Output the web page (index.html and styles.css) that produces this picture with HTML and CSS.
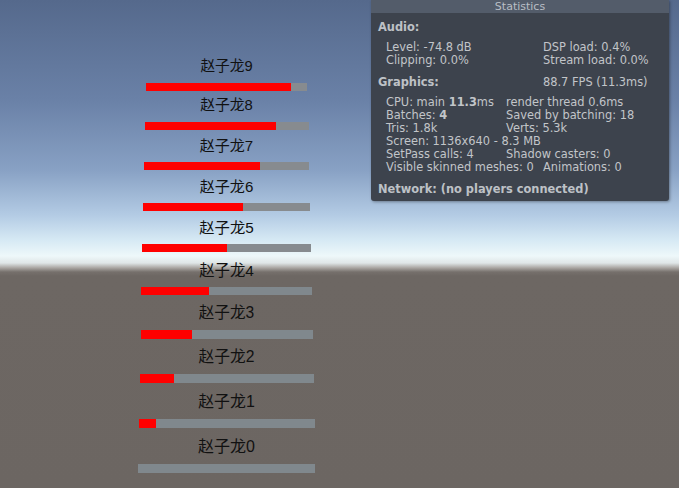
FILE: index.html
```html
<!DOCTYPE html>
<html>
<head>
<meta charset="utf-8">
<link rel="stylesheet" href="styles.css">
</head>
<body>
<div class="scene">
  <div class="list">
    <div class="row r9"><div class="label">赵子龙9</div><div class="track"><div class="fill" style="width:90%"></div></div></div>
    <div class="row r8"><div class="label">赵子龙8</div><div class="track"><div class="fill" style="width:80%"></div></div></div>
    <div class="row r7"><div class="label">赵子龙7</div><div class="track"><div class="fill" style="width:70%"></div></div></div>
    <div class="row r6"><div class="label">赵子龙6</div><div class="track"><div class="fill" style="width:60%"></div></div></div>
    <div class="row r5"><div class="label">赵子龙5</div><div class="track"><div class="fill" style="width:50%"></div></div></div>
    <div class="row r4"><div class="label">赵子龙4</div><div class="track"><div class="fill" style="width:40%"></div></div></div>
    <div class="row r3"><div class="label">赵子龙3</div><div class="track"><div class="fill" style="width:30%"></div></div></div>
    <div class="row r2"><div class="label">赵子龙2</div><div class="track"><div class="fill" style="width:20%"></div></div></div>
    <div class="row r1"><div class="label">赵子龙1</div><div class="track"><div class="fill" style="width:10%"></div></div></div>
    <div class="row r0"><div class="label">赵子龙0</div><div class="track"><div class="fill" style="width:0%"></div></div></div>
  </div>

  <div class="stats">
    <div class="title">Statistics</div>
    <div class="stats-body">
      <div class="line head"><span class="c1">Audio:</span></div>
      <div class="line gap7"><span class="c12">Level: -74.8 dB</span><span class="c3">DSP load: 0.4%</span></div>
      <div class="line"><span class="c12">Clipping: 0.0%</span><span class="c3">Stream load: 0.0%</span></div>
      <div class="line head gap9"><span class="c12">Graphics:</span><span class="c3 normal">88.7 FPS (11.3ms)</span></div>
      <div class="line gap7"><span class="c1">CPU: main <b>11.3</b>ms</span><span class="c23">render thread 0.6ms</span></div>
      <div class="line"><span class="c1">Batches: <b>4</b></span><span class="c23">Saved by batching: 18</span></div>
      <div class="line"><span class="c1">Tris: 1.8k</span><span class="c23">Verts: 5.3k</span></div>
      <div class="line"><span class="c123">Screen: 1136x640 - 8.3 MB</span></div>
      <div class="line"><span class="c1">SetPass calls: 4</span><span class="c23">Shadow casters: 0</span></div>
      <div class="line"><span class="c12">Visible skinned meshes: 0</span><span class="c3">Animations: 0</span></div>
      <div class="line head gap9"><span class="c123">Network: (no players connected)</span></div>
    </div>
  </div>
</div>
</body>
</html>
```

FILE: styles.css
```css
html, body {
  margin: 0;
  padding: 0;
}

.scene {
  position: relative;
  width: 679px;
  height: 488px;
  overflow: hidden;
  background: linear-gradient(to bottom,
    #55698c 0px,
    #6a81a7 100px,
    #88a1c4 170px,
    #b3cbe4 215px,
    #d6e9f4 240px,
    #eef8fa 256px,
    #dfe6e7 263px,
    #a8a4a0 268px,
    #76706c 272px,
    #6d6763 276px,
    #6c6662 488px);
}

.list {
  width: 453px;
  display: flex;
  flex-direction: column;
  align-items: center;
}

.row {
  display: flex;
  flex-direction: column;
  justify-content: flex-end;
  align-items: center;
}

.label {
  font-family: "Liberation Sans", "Noto Sans CJK SC", sans-serif;
  color: #111111;
  line-height: 1;
  margin-bottom: 9px;
  white-space: nowrap;
}

.track {
  background: #878b8f;
  height: 8px;
  display: flex;
}

.fill {
  background: #ff0000;
  height: 100%;
}

.r9 { height: 91px; }
.r8 { height: 39px; }
.r7 { height: 40px; }
.r6 { height: 41px; }
.r5 { height: 41px; }
.r4 { height: 43px; }
.r3 { height: 44px; }
.r2 { height: 44px; }
.r1 { height: 45px; }
.r0 { height: 45px; }

.r9 .track { width: 161px; }
.r8 .track { width: 164px; }
.r7 .track { width: 165px; }
.r6 .track { width: 167px; }
.r5 .track { width: 169px; }
.r4 .track { width: 171px; }
.r3 .track { width: 172px; height: 9px; }
.r2 .track { width: 174px; height: 9px; }
.r1 .track { width: 176px; height: 9px; }
.r0 .track { width: 177px; height: 9px; }

.r9 .label { font-size: 14.7px; }
.r8 .label { font-size: 14.8px; }
.r7 .label { font-size: 15px; }
.r6 .label { font-size: 15.1px; }
.r5 .label { font-size: 15.3px; }
.r4 .label { font-size: 15.4px; }
.r3 .label { font-size: 15.6px; }
.r2 .label { font-size: 15.7px; }
.r1 .label { font-size: 15.9px; }
.r0 .label { font-size: 16px; }

.r4 .track, .r3 .track, .r2 .track, .r1 .track, .r0 .track {
  background: #80888d;
}

/* Statistics overlay */
.stats {
  position: absolute;
  left: 371px;
  top: 0;
  width: 298px;
  height: 201px;
  background: #3d434d;
  border-radius: 0 0 3px 3px;
  box-shadow: 1px 1px 3px rgba(0, 0, 0, 0.35);
  font-family: "DejaVu Sans", Verdana, sans-serif;
  font-size: 11.4px;
  color: #c2c5c9;
}

.title {
  height: 13px;
  line-height: 13px;
  background: #535c6a;
  text-align: center;
  font-size: 11px;
  color: #b9bec5;
}

.stats-body {
  padding: 8px 0 0 7px;
}

.line {
  display: grid;
  grid-template-columns: 8px 120px 37px 1fr;
  height: 13px;
  line-height: 13px;
  white-space: nowrap;
}

.head {
  font-weight: bold;
  color: #bdc1c6;
}

.normal {
  font-weight: normal;
  color: #c2c5c9;
}

.gap7 { margin-top: 7px; }
.gap9 { margin-top: 9px; }

.c1 { grid-column: 2; }
.line.head .c1 { grid-column: 1 / 3; }
.c12 { grid-column: 2 / 4; }
.line.head .c12 { grid-column: 1 / 4; }
.c123 { grid-column: 2 / 5; }
.line.head .c123 { grid-column: 1 / 5; }
.c23 { grid-column: 3 / 5; }
.c3 { grid-column: 4; }

b { font-weight: bold; }
```
